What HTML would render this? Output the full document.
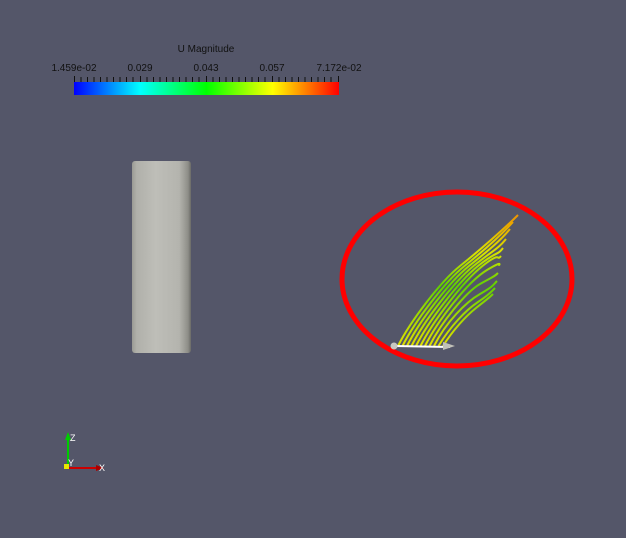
<!DOCTYPE html>
<html><head><meta charset="utf-8"><style>
html,body{margin:0;padding:0;background:#545669;width:626px;height:538px;overflow:hidden}
svg{display:block}
text{font-family:"Liberation Sans",sans-serif;fill:#111}
</style></head><body>
<svg width="626" height="538" viewBox="0 0 626 538">
<defs>
<linearGradient id="cb" x1="0" x2="1" y1="0" y2="0">
<stop offset="0" stop-color="#0000ff"/>
<stop offset="0.25" stop-color="#00ffff"/>
<stop offset="0.5" stop-color="#00ff00"/>
<stop offset="0.75" stop-color="#ffff00"/>
<stop offset="1" stop-color="#ff0000"/>
</linearGradient>
<linearGradient id="sl" gradientUnits="userSpaceOnUse" x1="0" y1="346" x2="0" y2="213">
<stop offset="0" stop-color="#e0e000"/>
<stop offset="0.3" stop-color="#90d800"/>
<stop offset="0.45" stop-color="#60d000"/>
<stop offset="0.7" stop-color="#d8e400"/>
<stop offset="1" stop-color="#f09000"/>
</linearGradient>
<linearGradient id="cyl" x1="0" x2="1" y1="0" y2="0">
<stop offset="0" stop-color="#9a9a94"/>
<stop offset="0.08" stop-color="#b0b0aa"/>
<stop offset="0.4" stop-color="#bebeb8"/>
<stop offset="0.8" stop-color="#b4b4ae"/>
<stop offset="0.95" stop-color="#8e8e88"/>
<stop offset="1" stop-color="#6a6a66"/>
</linearGradient>
</defs>
<text x="206" y="52" font-size="10" text-anchor="middle">U Magnitude</text>
<text x="74" y="71" font-size="10" text-anchor="middle">1.459e-02</text>
<text x="140" y="71" font-size="10" text-anchor="middle">0.029</text>
<text x="206" y="71" font-size="10" text-anchor="middle">0.043</text>
<text x="272" y="71" font-size="10" text-anchor="middle">0.057</text>
<text x="339" y="71" font-size="10" text-anchor="middle">7.172e-02</text>
<g stroke="#111" stroke-width="1">
<path d="M74.5,76v6M81,77v5M87.5,77v5M94,77v5M100.5,77v5M107,77v5M113.5,77v5M120,77v5M126.5,77v5M133,77v5M140.5,76v12M147,77v5M153.5,77v5M160,77v5M166.5,77v5M173,77v5M179.5,77v5M186,77v5M192.5,77v5M199,77v5M206.5,76v12M213,77v5M219.5,77v5M226,77v5M232.5,77v5M239,77v5M245.5,77v5M252,77v5M258.5,77v5M265,77v5M272.5,76v12M279,77v5M285.5,77v5M292,77v5M298.5,77v5M305,77v5M311.5,77v5M318,77v5M324.5,77v5M331,77v5M338.5,76v6"/>
</g>
<rect x="74" y="82" width="265" height="13" fill="url(#cb)"/>
<rect x="132" y="161" width="59" height="192" rx="3" fill="url(#cyl)"/>
<ellipse cx="457" cy="279" rx="115" ry="87" fill="none" stroke="#ff0000" stroke-width="5"/>
<g fill="none" stroke="url(#sl)" stroke-width="2">
<path d="M398,346 C410,322 440,282 460,266 S505,228 518,215"/>
<path d="M402.5,346 C414.5,322 444.5,282 464.5,266 S502,234 513,222"/>
<path d="M407,346 C419,322 449,282 469,266 S500,241 510,229"/>
<path d="M411.5,346 C423.5,322 453.5,282 473.5,266 S498,249 506,239"/>
<path d="M416,346 C428,322 458,282 478,266 S497,256 503,248"/>
<path d="M420.5,346 C432.5,322 462.5,282 482.5,266 S496,262 501,256"/>
<path d="M425,346 C437,322 467,282 487,270 S496,268 500,264"/>
<path d="M429.5,346 C441.5,322 466,292 480,284 S494,277 498,273"/>
<path d="M434,346 C446,322 466,302 480,294 S493,285 497,281"/>
<path d="M438.5,346 C450.5,326 466,310 478,302 S491,292 495,288"/>
<path d="M443,346 C453,330 466,316 476,308 S489,298 493,294"/>
</g>
<line x1="395" y1="346" x2="450" y2="347" stroke="#fff" stroke-width="2"/>
<circle cx="394" cy="346" r="3.5" fill="#c8c8c2"/>
<path d="M443,342 L455,346 L443,350 Z" fill="#c0c0b8"/>
<line x1="68" y1="467" x2="68" y2="434" stroke="#00cc00" stroke-width="2"/>
<path d="M65,440 L68,432 L71,440Z" fill="#00cc00"/>
<line x1="68" y1="468" x2="100" y2="468" stroke="#cc0000" stroke-width="2"/>
<path d="M96,465 L104,468 L96,471Z" fill="#aa0000"/>
<rect x="64" y="464" width="5" height="5" fill="#e8e800"/>
<text x="70" y="441" font-size="9" style="fill:#fff">Z</text>
<text x="68" y="466" font-size="9" style="fill:#fff">Y</text>
<text x="99" y="471" font-size="9" style="fill:#fff">X</text>
</svg>
</body></html>
